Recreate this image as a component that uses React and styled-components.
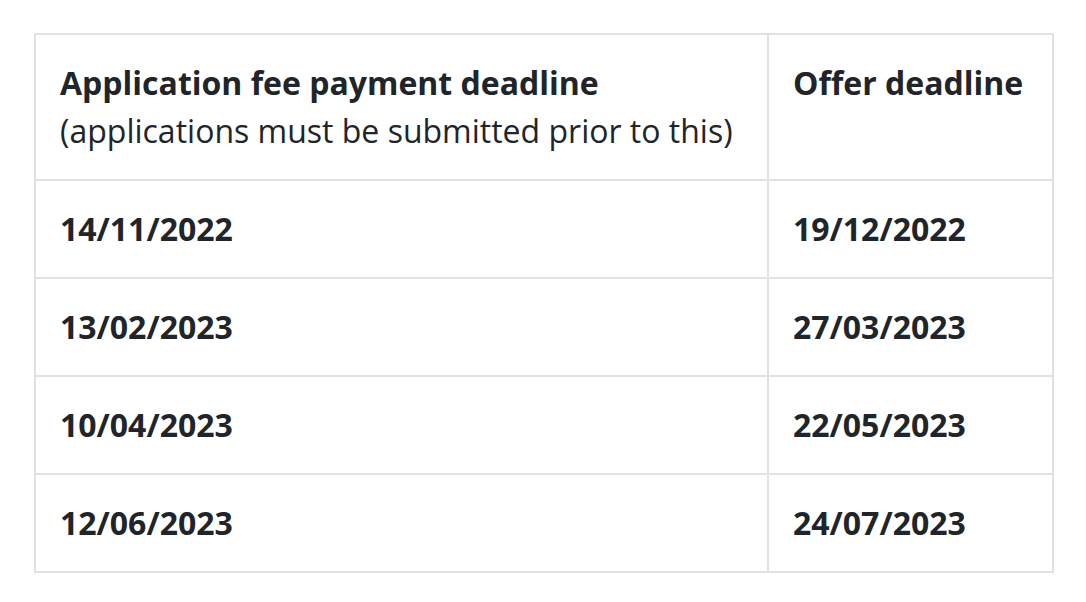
import React from 'react';
import styled, { createGlobalStyle } from 'styled-components';

const GlobalStyle = createGlobalStyle`
    html, body {
        margin: 0;
        padding: 0;
        background-color: #FFFFFF;
    }
    body {
        font-family: 'Open Sans', 'Noto Sans', sans-serif;
        color: #212529;
    }
`;

const deadlines = [
    { payment: '14/11/2022', offer: '19/12/2022' },
    { payment: '13/02/2023', offer: '27/03/2023' },
    { payment: '10/04/2023', offer: '22/05/2023' },
    { payment: '12/06/2023', offer: '24/07/2023' },
];

export default function App(){
    return(
        <Page>
            <GlobalStyle />
            <Table>
                <thead>
                    <tr>
                        <HeadCell>
                            <strong>Application fee payment deadline</strong>
                            <br />
                            <Note>(applications must be submitted prior to this)</Note>
                        </HeadCell>
                        <HeadCell $width = {285}>
                            <strong>Offer deadline</strong>
                        </HeadCell>
                    </tr>
                </thead>
                <tbody>
                    {deadlines.map((row) =>
                        <tr key = {row.payment}>
                            <Cell>{row.payment}</Cell>
                            <Cell>{row.offer}</Cell>
                        </tr>
                    )}
                </tbody>
            </Table>
        </Page>
    );
}

const Page = styled.div`
    padding: 33px 34px;
`;

const Table = styled.table`
    border-collapse: collapse;
    width: 1020px;
    table-layout: fixed;
`;

const HeadCell = styled.th`
    box-sizing: border-box;
    width: ${props => props.$width ? `${props.$width}px` : 'auto'};
    border: 2px solid #DEE2E6;
    padding: 24px 24px 24px;
    text-align: left;
    vertical-align: top;
    font-size: 32px;
    line-height: 48px;
    font-weight: 400;
    white-space: nowrap;
    strong{
        font-weight: 700;
    }
`;

const Note = styled.span`
    font-weight: 400;
`;

const Cell = styled.td`
    border: 2px solid #DEE2E6;
    padding: 24px 24px;
    font-size: 32px;
    line-height: 48px;
    font-weight: 700;
    vertical-align: middle;
`;
